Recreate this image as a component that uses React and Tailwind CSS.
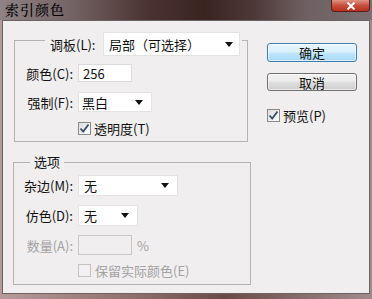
import React from "react";

const font = { fontFamily: '"Noto Sans CJK SC", "Noto Sans", sans-serif' };

function Arrow() {
  return (
    <svg width="8" height="5" viewBox="0 0 8 5" className="shrink-0">
      <path d="M0 0 H8 L4 5 Z" fill="#111" />
    </svg>
  );
}

function Select({ w, h, text, pl = "pl-[4px]", pr = "pr-[7px]" }) {
  return (
    <div
      className={`flex items-center justify-between bg-white border border-[#e4e2e3] ${pl} ${pr} ${w} ${h} text-[13px] leading-none text-[#111]`}
    >
      <span>{text}</span>
      <Arrow />
    </div>
  );
}

function Check({ checked, disabled }) {
  return (
    <div
      className={`w-[13px] h-[13px] border ${
        disabled ? "border-[#c4c2c3] bg-[#f2f0f1]" : "border-[#8a8a8a] bg-[linear-gradient(135deg,#dcdcdc,#ffffff)]"
      } flex items-center justify-center shrink-0`}
    >
      {checked && (
        <svg width="11" height="11" viewBox="0 0 11 11">
          <path d="M1.5 5.5 L4.2 8.5 L9.5 1.5" fill="none" stroke="#3b4a6e" strokeWidth="1.8" />
        </svg>
      )}
    </div>
  );
}

export default function App() {
  return (
    <div
      className="w-[372px] h-[299px] overflow-hidden flex flex-col bg-[linear-gradient(to_right,#b79a9a,#8a6a66_40%,#6a4a46_60%,#a28a8c)]"
      style={font}
    >
      {/* title bar */}
      <div className="h-[20px] shrink-0 flex items-start bg-[linear-gradient(to_right,#8e8284_0%,#766668_18%,#4a3230_40%,#3a2420_55%,#4c3836_68%,#6e6062_82%,#7a6e72_100%)]">
        <span
          className="pl-[5px] pt-[1px] h-[20px] text-[14px] leading-[17px] tracking-[1px] text-black font-medium"
          style={{ fontFamily: '"Noto Serif CJK SC","Noto Sans CJK SC",serif' }}
        >
          索引颜色
        </span>
        <div className="ml-auto mr-[2px] w-[39px] h-[12px] rounded-b-[4px] border border-t-0 border-[#5a1e16] bg-[linear-gradient(to_bottom,#e09484,#c8503c_50%,#b8301e)] flex items-center justify-center">
          <svg width="10" height="8" viewBox="0 0 10 8">
            <path d="M1.5 0.5 L8.5 7.5 M8.5 0.5 L1.5 7.5" stroke="#fff" strokeWidth="2" />
          </svg>
        </div>
      </div>

      {/* body */}
      <div className="mx-[2px] h-[274px] shrink-0 border border-[#6b6264] bg-[#f0eeef] flex text-[13px] leading-none text-[#111]">
        {/* left column */}
        <div className="pl-[10px] w-[248px] shrink-0 flex flex-col">
          {/* group 1 */}
          <div className="ml-[1px] mt-[19px] w-[234px] h-[102px] border border-[#b6b2b4] flex flex-col">
            <div className="-mt-[9px] ml-[30px] self-start flex items-center bg-[#f0eeef] pl-[5px] pr-[2px] h-[24px]">
              <span className="w-[45px] whitespace-nowrap">调板(L):</span>
              <div className="ml-[8px]">
                <Select w="w-[137px]" h="h-[24px]" text="局部（可选择）" pl="pl-[5px]" pr="pr-[6px]" />
              </div>
            </div>
            <div className="mt-[8px] flex items-center h-[18px]">
              <span className="w-[58px] text-right whitespace-nowrap">颜色(C):</span>
              <div className="ml-[5px] w-[54px] h-[18px] bg-white border border-[#dcdadb] flex items-center pl-[4px]">256</div>
            </div>
            <div className="mt-[10px] flex items-center h-[20px]">
              <span className="w-[58px] text-right whitespace-nowrap">强制(F):</span>
              <div className="ml-[5px]">
                <Select w="w-[74px]" h="h-[20px]" text="黑白" pl="pl-[3px]" pr="pr-[8px]" />
              </div>
            </div>
            <div className="mt-[8px] flex items-center h-[16px] pl-[63px]">
              <Check checked />
              <span className="ml-[3px] whitespace-nowrap">透明度(T)</span>
            </div>
          </div>

          {/* group 2 */}
          <div className="mt-[20px] w-[238px] h-[123px] border border-[#b6b2b4] flex flex-col">
            <div className="-mt-[10px] ml-[16px] self-start h-[16px] flex items-center bg-[#f0eeef] px-[4px]">
              选项
            </div>
            <div className="mt-[6px] flex items-center h-[21px]">
              <span className="w-[59px] text-right whitespace-nowrap">杂边(M):</span>
              <div className="ml-[5px]">
                <Select w="w-[100px]" h="h-[21px]" text="无" pl="pl-[5px]" pr="pr-[8px]" />
              </div>
            </div>
            <div className="mt-[9px] flex items-center h-[21px]">
              <span className="w-[59px] text-right whitespace-nowrap">仿色(D):</span>
              <div className="ml-[5px]">
                <Select w="w-[60px]" h="h-[21px]" text="无" pl="pl-[5px]" pr="pr-[8px]" />
              </div>
            </div>
            <div className="mt-[9px] flex items-center h-[20px] text-[#a3a1a2]">
              <span className="w-[59px] text-right whitespace-nowrap">数量(A):</span>
              <div className="ml-[5px] w-[54px] h-[20px] border border-[#c9c7c8] bg-[#f0eeef]" />
              <span className="ml-[5px]">%</span>
            </div>
            <div className="mt-[7px] flex items-center h-[16px] pl-[64px] text-[#a3a1a2]">
              <Check disabled />
              <span className="ml-[4px] whitespace-nowrap">保留实际颜色(E)</span>
            </div>
          </div>
        </div>

        {/* right column */}
        <div className="ml-[16px] pt-[22px] flex flex-col">
          <div className="w-[90px] h-[19px] rounded-[3px] border border-[#3c7fb1] bg-[linear-gradient(to_bottom,#eaf6fd_0%,#d9f0fc_45%,#bee6fd_55%,#a7d9f5_100%)] flex items-center justify-center shadow-[inset_0_0_0_1px_rgba(255,255,255,0.6)]">
            确定
          </div>
          <div className="mt-[11px] w-[90px] h-[18px] rounded-[3px] border border-[#707070] bg-[linear-gradient(to_bottom,#f2f2f2_0%,#ebebeb_45%,#dddddd_55%,#cfcfcf_100%)] flex items-center justify-center shadow-[inset_0_0_0_1px_rgba(255,255,255,0.6)]">
            取消
          </div>
          <div className="mt-[17px] flex items-center h-[14px]">
            <Check checked />
            <span className="ml-[3px] whitespace-nowrap">预览(P)</span>
          </div>
        </div>
      </div>
    </div>
  );
}
